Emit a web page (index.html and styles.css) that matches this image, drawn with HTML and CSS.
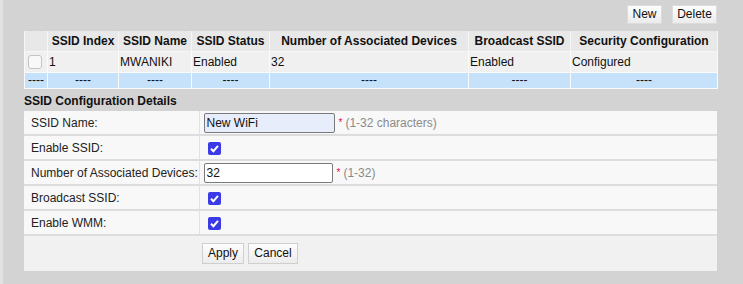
FILE: index.html
```html
<!DOCTYPE html>
<html>
<head>
<meta charset="utf-8">
<link rel="stylesheet" href="styles.css">
</head>
<body>
<div class="page">
  <div class="toolbar">
    <button class="btn">New</button>
    <button class="btn">Delete</button>
  </div>
  <table class="list">
    <colgroup>
      <col class="c0"><col class="c1"><col class="c2"><col class="c3"><col class="c4"><col class="c5"><col class="c6">
    </colgroup>
    <thead>
      <tr>
        <th></th>
        <th>SSID Index</th>
        <th>SSID Name</th>
        <th>SSID Status</th>
        <th>Number of Associated Devices</th>
        <th>Broadcast SSID</th>
        <th>Security Configuration</th>
      </tr>
    </thead>
    <tbody>
      <tr class="data">
        <td class="chk"><span class="box"></span></td>
        <td>1</td>
        <td>MWANIKI</td>
        <td>Enabled</td>
        <td>32</td>
        <td>Enabled</td>
        <td>Configured</td>
      </tr>
      <tr class="sel">
        <td>----</td><td>----</td><td>----</td><td>----</td><td>----</td><td>----</td><td>----</td>
      </tr>
    </tbody>
  </table>
  <div class="section">SSID Configuration Details</div>
  <table class="form">
    <colgroup><col class="lab"><col></colgroup>
    <tr>
      <td class="label">SSID Name:</td>
      <td><input class="txt txt-active" type="text" value="New WiFi"><span class="req">*</span><span class="hint">(1-32 characters)</span></td>
    </tr>
    <tr>
      <td class="label">Enable SSID:</td>
      <td><span class="cb"><svg viewBox="0 0 13 13" width="13" height="13"><path d="M3 6.8 L5.4 9.2 L10 3.8" fill="none" stroke="#fff" stroke-width="2"/></svg></span></td>
    </tr>
    <tr>
      <td class="label">Number of Associated Devices:</td>
      <td><input class="txt txt-num" type="text" value="32"><span class="req">*</span><span class="hint">(1-32)</span></td>
    </tr>
    <tr>
      <td class="label">Broadcast SSID:</td>
      <td><span class="cb"><svg viewBox="0 0 13 13" width="13" height="13"><path d="M3 6.8 L5.4 9.2 L10 3.8" fill="none" stroke="#fff" stroke-width="2"/></svg></span></td>
    </tr>
    <tr>
      <td class="label">Enable WMM:</td>
      <td><span class="cb"><svg viewBox="0 0 13 13" width="13" height="13"><path d="M3 6.8 L5.4 9.2 L10 3.8" fill="none" stroke="#fff" stroke-width="2"/></svg></span></td>
    </tr>
    <tr class="actions">
      <td></td>
      <td><button class="btn btn2">Apply</button><button class="btn btn2">Cancel</button></td>
    </tr>
  </table>
</div>
</body>
</html>
```

FILE: styles.css
```css
html, body {
  margin: 0;
  padding: 0;
  background: #d3d3d3;
}
body {
  font-family: "Liberation Sans", Arial, sans-serif;
  font-size: 12px;
  color: #111;
}
.page {
  border-left: 3px solid #e2e2e2;
  min-height: 284px;
  box-sizing: border-box;
  padding: 5px 26px 0 21px;
}
.toolbar {
  display: flex;
  justify-content: flex-end;
  gap: 10px;
  height: 19px;
}
.btn {
  font-family: "Liberation Sans", Arial, sans-serif;
  font-size: 12px;
  color: #111;
  background: linear-gradient(#fdfdfd, #ececec);
  border: 1px solid #dcdcdc;
  border-radius: 0;
  padding: 0;
  height: 19px;
  line-height: 17px;
  margin: 0;
}
.toolbar .btn:first-child { width: 35px; }
.toolbar .btn:last-child { width: 45px; }
.list {
  margin-top: 7px;
  width: 693px;
  border-collapse: collapse;
  table-layout: fixed;
}
.c0 { width: 23px; }
.c1 { width: 71px; }
.c2 { width: 73px; }
.c3 { width: 78px; }
.c4 { width: 199px; }
.c5 { width: 102px; }
.c6 { width: 147px; }
.list th {
  background: #e8e8e8;
  font-weight: bold;
  text-align: center;
  height: 20px;
  padding: 0;
  border: 1px solid #f6f6f6;
  border-top: none;
  white-space: nowrap;
}
.list td {
  padding: 0 0 0 1px;
  border: 1px solid #fafafa;
  white-space: nowrap;
}
.list tr.data td {
  background: #f0f0f0;
  height: 20px;
}
.list td.chk { padding-left: 3px; }
.box {
  display: block;
  width: 12px;
  height: 12px;
  border: 1px solid #c4c4c4;
  border-radius: 3px;
  background: #f8f8f8;
}
.list tr.sel td {
  background: #c6e2fa;
  height: 15px;
  text-align: center;
  line-height: 13px;
  padding: 0;
}
.section {
  font-weight: bold;
  margin-top: 5px;
  height: 17px;
  line-height: 14px;
}
.form {
  width: 693px;
  border-collapse: collapse;
  table-layout: fixed;
}
.lab { width: 175px; }
.form td {
  background: #f8f8f8;
  height: 23px;
  padding: 0;
  border-bottom: 2px solid #dddddd;
  vertical-align: middle;
  white-space: nowrap;
}
.form td.label {
  padding-left: 7px;
  border-right: 1px solid #e2e2e2;
  color: #222;
}
.form td + td { padding-left: 4px; }
.txt {
  font-family: "Liberation Sans", Arial, sans-serif;
  font-size: 12px;
  color: #111;
  box-sizing: border-box;
  height: 20px;
  border: 1px solid #7a7a7a;
  border-radius: 2px;
  padding: 0 2px;
  margin: 0;
  vertical-align: middle;
}
.txt-active { width: 131px; background: #e8edfb; }
.txt-num { width: 129px; background: #fff; }
.req {
  color: #e0104a;
  font-size: 10px;
  margin-left: 4px;
  vertical-align: middle;
}
.hint {
  color: #8a8a8a;
  margin-left: 3px;
  vertical-align: middle;
}
.cb {
  display: inline-block;
  width: 13px;
  height: 13px;
  background: #3a3ae6;
  border-radius: 2px;
  vertical-align: middle;
  margin-left: 4px;
}
.cb svg { display: block; }
.form tr.actions td {
  background: #f1f1f1;
  height: 35px;
  border-bottom: none;
  border-right: none;
}
.btn2 {
  height: 21px;
  margin-right: 4px;
  border: 1px solid #cfcfcf;
}
.actions .btn2:first-child { margin-left: -1px; width: 42px; }
.actions .btn2:last-child { width: 50px; }
```
